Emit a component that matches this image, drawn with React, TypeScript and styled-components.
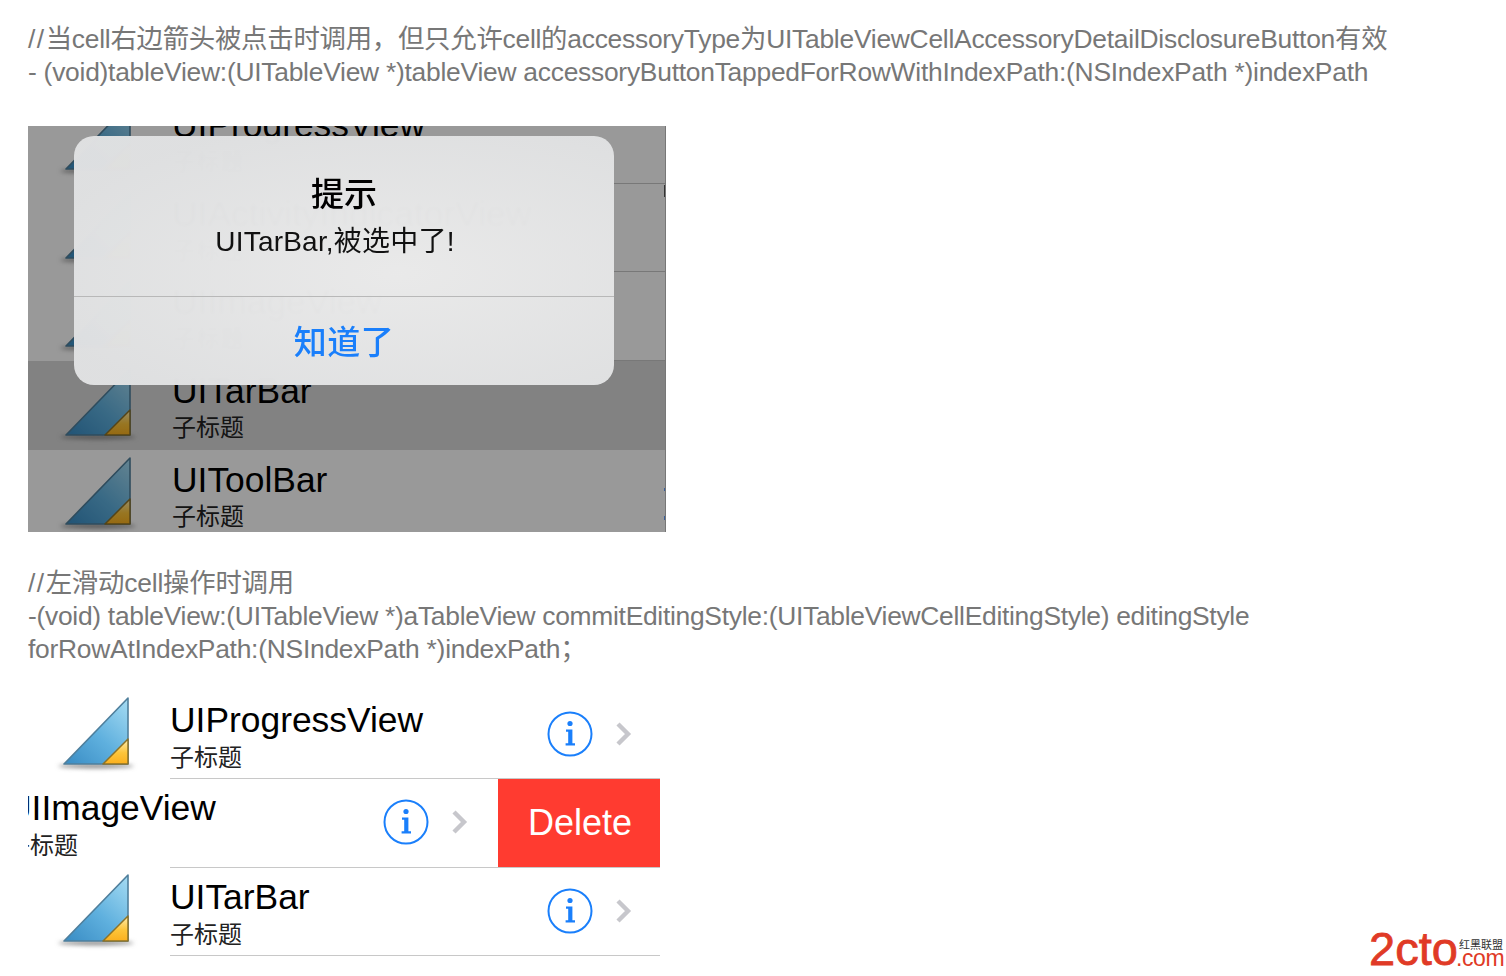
import React from "react";
import styled, { createGlobalStyle } from "styled-components";

const FONT = `"Liberation Sans", "Noto Sans CJK SC", sans-serif`;

const Global = createGlobalStyle`
  html, body { margin: 0; padding: 0; background: #fff; }
  body { font-family: ${FONT}; }
`;

const Page = styled.main`
  position: relative;
  width: 1506px;
  height: 976px;
  overflow: hidden;
  box-sizing: border-box;
  padding: 23px 0 0 28px;
`;

const Paragraph = styled.p<{ $after: number }>`
  margin: 0 0 ${(p) => p.$after}px;
  color: #777;
  font-size: 26.4px;
  line-height: 33px;
  white-space: nowrap;
`;

const TextLine = styled.span<{ $spacing: number }>`
  display: block;
  letter-spacing: ${(p) => p.$spacing}px;
`;

const Slashes = styled.span`
  letter-spacing: 1.5px;
`;

const DimFigure = styled.figure`
  position: relative;
  margin: 0 0 34.5px;
  width: 638px;
  height: 406px;
  overflow: hidden;
  background: #fff;
  box-sizing: border-box;
  border-right: 1px solid #777;
`;

const DimList = styled.div`
  margin-top: -31px;
`;

const Scrim = styled.div`
  position: absolute;
  inset: 0;
  background: rgba(0, 0, 0, 0.4);
`;

const EdgeMark = styled.div<{ $top: number; $height: number; $color: string }>`
  position: absolute;
  right: -1px;
  top: ${(p) => p.$top}px;
  width: 2px;
  height: ${(p) => p.$height}px;
  background: ${(p) => p.$color};
`;

const Row = styled.div<{ $selected?: boolean }>`
  position: relative;
  display: flex;
  height: 88.67px;
  overflow: hidden;
  background: ${(p) => (p.$selected ? "#d9d9d9" : "#fff")};
  &::after {
    content: "";
    position: absolute;
    left: 142px;
    right: 0;
    bottom: 0;
    height: 1px;
    background: ${(p) => (p.$selected ? "transparent" : "#c8c8c8")};
  }
`;

const RowContent = styled.div<{ $shift?: number }>`
  display: flex;
  flex: 0 0 632px;
  margin-left: ${(p) => -(p.$shift ?? 0)}px;
`;

const IconSlot = styled.div<{ $dim?: boolean }>`
  flex: 0 0 ${(p) => (p.$dim ? 144 : 142)}px;
  padding-left: ${(p) => (p.$dim ? 24 : 22)}px;
  padding-top: ${(p) => (p.$dim ? 1 : 0)}px;
  box-sizing: border-box;
`;

const RowText = styled.div<{ $dim?: boolean }>`
  padding-top: ${(p) => (p.$dim ? 10 : 9)}px;
`;

const RowTitle = styled.div`
  color: #000;
  font-size: 35.4px;
  line-height: 40px;
`;

const RowSub = styled.div<{ $dim?: boolean }>`
  margin-top: ${(p) => (p.$dim ? 3 : 4)}px;
  color: #222;
  font-size: 24px;
  line-height: 28px;
`;

const Accessories = styled.div`
  display: flex;
  align-items: center;
  gap: 22px;
  margin-left: auto;
  padding-right: 28px;
  padding-bottom: 2px;
`;

const DeleteAction = styled.div`
  flex: 1;
  margin-left: 2px;
  margin-bottom: 1px;
  padding-left: 2px;
  display: flex;
  align-items: center;
  justify-content: center;
  background: #ff3b30;
  color: #fff;
  font-size: 36px;
  position: relative;
  z-index: 1;
`;

const Alert = styled.div`
  position: absolute;
  left: 46px;
  top: 10px;
  width: 540px;
  height: 249px;
  border-radius: 20px;
  overflow: hidden;
  display: flex;
  flex-direction: column;
  backdrop-filter: blur(1.5px);
  background: radial-gradient(ellipse at 60% 55%, rgba(235, 235, 235, 0.985), rgba(224, 225, 226, 0.985) 80%);
`;

const AlertBody = styled.div`
  flex: 0 0 160px;
  border-bottom: 1px solid #b8b8b8;
  text-align: center;
  color: #000;
`;

const AlertTitle = styled.div`
  margin-top: 39px;
  font-size: 33px;
  font-weight: 500;
  line-height: 40px;
`;

const AlertMessage = styled.div`
  margin-top: 9px;
  padding-right: 18px;
  font-size: 28px;
  letter-spacing: 0.2px;
  line-height: 36px;
  color: #111;
`;

const AlertButton = styled.div`
  flex: 1;
  display: flex;
  align-items: center;
  justify-content: center;
  padding-bottom: 2px;
  color: #1a7ffb;
  font-size: 33px;
  font-weight: 500;
  letter-spacing: 0.5px;
`;

const LiveList = styled.section`
  width: 632px;
`;

const Watermark = styled.div`
  position: absolute;
  left: 1369px;
  top: 926px;
  width: 137px;
  height: 46px;
  color: #e03a26;
`;

const MarkMain = styled.span`
  position: absolute;
  left: 0;
  top: 0;
  font-size: 47px;
  line-height: 46px;
  -webkit-text-stroke: 0.8px #e03a26;
`;

const MarkCn = styled.span`
  position: absolute;
  left: 90px;
  top: 13px;
  font-size: 11px;
  line-height: 12px;
  color: #333;
`;

const MarkCom = styled.span`
  position: absolute;
  left: 87px;
  top: 20px;
  font-size: 23px;
  line-height: 24px;
  letter-spacing: -0.4px;
`;

const TriangleIcon = () => (
  <svg width="92" height="84" viewBox="0 0 92 84" aria-hidden="true">
    <defs>
      <linearGradient id="triBlue" x1="1" y1="0" x2="0.1" y2="1">
        <stop offset="0" stopColor="#a6dcf3" />
        <stop offset="0.55" stopColor="#5fb0de" />
        <stop offset="1" stopColor="#3c8fc6" />
      </linearGradient>
      <linearGradient id="triGold" x1="0.5" y1="0" x2="0.5" y2="1">
        <stop offset="0" stopColor="#ffeeb0" />
        <stop offset="0.55" stopColor="#fdc53a" />
        <stop offset="1" stopColor="#fbb01e" />
      </linearGradient>
      <filter id="triBlur" x="-20%" y="-200%" width="140%" height="500%">
        <feGaussianBlur stdDeviation="2" />
      </filter>
    </defs>
    <ellipse cx="46" cy="75" rx="38" ry="2.2" fill="#8a8a8a" filter="url(#triBlur)" />
    <path d="M78 7 L14 73 H78 Z" fill="url(#triBlue)" stroke="#4f7f9c" strokeWidth="1.6" strokeLinejoin="round" />
    <path d="M78 48 L53 73 H78 Z" fill="url(#triGold)" stroke="#8c7228" strokeWidth="1.5" strokeLinejoin="round" />
  </svg>
);

const InfoIcon = () => (
  <svg width="46" height="46" viewBox="0 0 46 46" aria-hidden="true">
    <circle cx="23" cy="23" r="21.5" fill="none" stroke="#1a7ffb" strokeWidth="2" />
    <circle cx="23" cy="12.5" r="2.6" fill="#1a7ffb" />
    <path d="M19 18.5 H25.4 V32.2 H28 V34.5 H18.6 V32.2 H21.2 V20.8 H19 Z" fill="#1a7ffb" />
  </svg>
);

const Chevron = () => (
  <svg width="17" height="26" viewBox="0 0 17 26" aria-hidden="true">
    <path d="M3 3 L13 13 L3 23" fill="none" stroke="#c7c7cc" strokeWidth="4.4" />
  </svg>
);

const Cell = ({ title, selected }: { title: string; selected?: boolean }) => (
  <Row $selected={selected}>
    <RowContent>
      <IconSlot $dim><TriangleIcon /></IconSlot>
      <RowText $dim>
        <RowTitle>{title}</RowTitle>
        <RowSub $dim>子标题</RowSub>
      </RowText>
    </RowContent>
  </Row>
);

const LiveCell = ({ title, shift }: { title: string; shift?: number }) => (
  <Row>
    <RowContent $shift={shift}>
      <IconSlot><TriangleIcon /></IconSlot>
      <RowText>
        <RowTitle>{title}</RowTitle>
        <RowSub>子标题</RowSub>
      </RowText>
      <Accessories>
        <InfoIcon />
        <Chevron />
      </Accessories>
    </RowContent>
    {shift ? <DeleteAction>Delete</DeleteAction> : null}
  </Row>
);

export default function App() {
  return (
    <Page>
      <Global />
      <Paragraph $after={37}>
        <TextLine $spacing={-0.25}><Slashes>//</Slashes>当cell右边箭头被点击时调用，但只允许cell的accessoryType为UITableViewCellAccessoryDetailDisclosureButton有效</TextLine>
        <TextLine $spacing={-0.25}>- (void)tableView:(UITableView *)tableView accessoryButtonTappedForRowWithIndexPath:(NSIndexPath *)indexPath</TextLine>
      </Paragraph>
      <DimFigure>
        <DimList>
          <Cell title="UIProgressView" />
          <Cell title="UIActivityIndicatorView" />
          <Cell title="UIImageView" />
          <Cell title="UITarBar" selected />
          <Cell title="UIToolBar" />
        </DimList>
        <Scrim />
        <EdgeMark $top={59} $height={12} $color="#333" />
        <EdgeMark $top={362} $height={3} $color="#3a5f9a" />
        <EdgeMark $top={390} $height={4} $color="#3a5f9a" />
        <Alert>
          <AlertBody>
            <AlertTitle>提示</AlertTitle>
            <AlertMessage>UITarBar,被选中了!</AlertMessage>
          </AlertBody>
          <AlertButton>知道了</AlertButton>
        </Alert>
      </DimFigure>
      <Paragraph $after={25}>
        <TextLine $spacing={-0.2}><Slashes>//</Slashes>左滑动cell操作时调用</TextLine>
        <TextLine $spacing={-0.28}>-(void) tableView:(UITableView *)aTableView commitEditingStyle:(UITableViewCellEditingStyle) editingStyle</TextLine>
        <TextLine $spacing={-0.25}>forRowAtIndexPath:(NSIndexPath *)indexPath；</TextLine>
      </Paragraph>
      <LiveList>
        <LiveCell title="UIProgressView" />
        <LiveCell title="UIImageView" shift={164} />
        <LiveCell title="UITarBar" />
      </LiveList>
      <Watermark>
        <MarkMain>2cto</MarkMain>
        <MarkCn>红黑联盟</MarkCn>
        <MarkCom>.com</MarkCom>
      </Watermark>
    </Page>
  );
}
